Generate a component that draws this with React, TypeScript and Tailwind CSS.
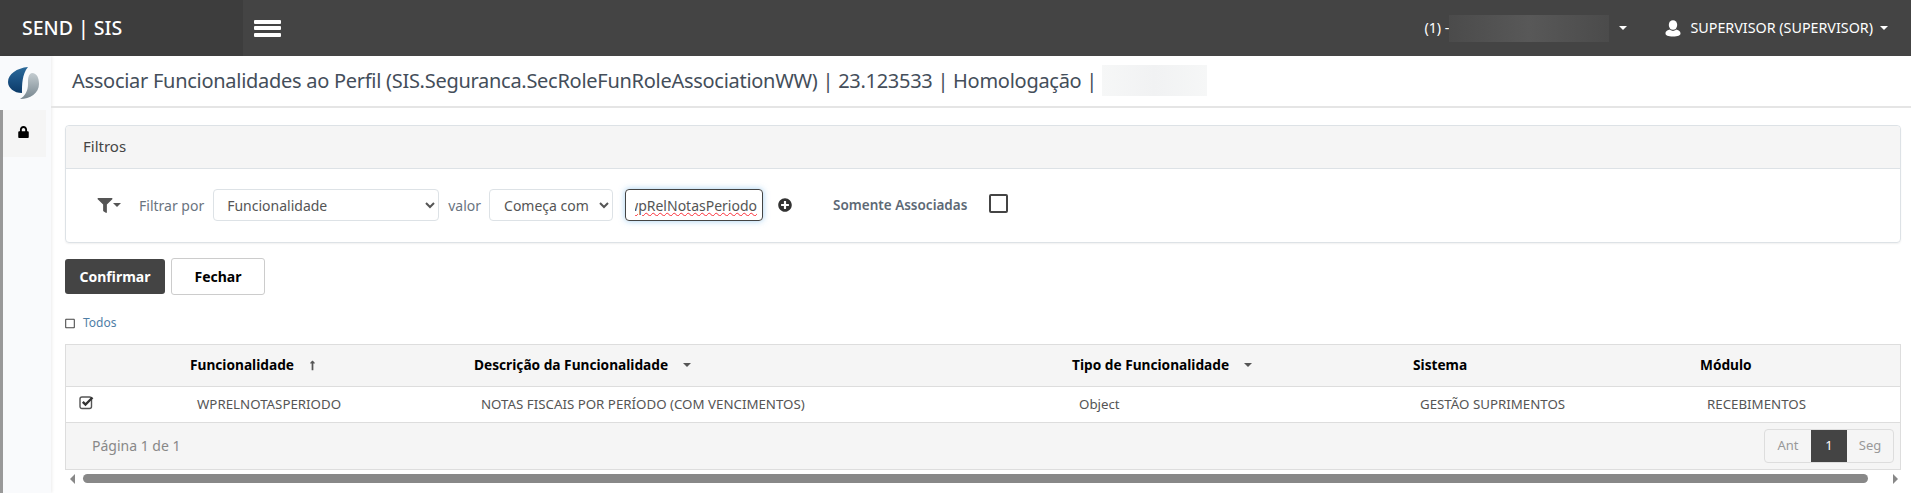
import { FaFilter, FaLock, FaLongArrowAltUp, FaPlusCircle, FaRegSquare } from 'react-icons/fa'

const columns = [
  { title: 'Funcionalidade', value: 'WPRELNOTASPERIODO', sort: 'up' },
  { title: 'Descrição da Funcionalidade', value: 'NOTAS FISCAIS POR PERÍODO (COM VENCIMENTOS)', sort: 'down' },
  { title: 'Tipo de Funcionalidade', value: 'Object', sort: 'down' },
  { title: 'Sistema', value: 'GESTÃO SUPRIMENTOS', sort: '' },
  { title: 'Módulo', value: 'RECEBIMENTOS', sort: '' },
]

function Caret({ className }: { className?: string }) {
  return <span className={`inline-block w-0 h-0 border-x-[4px] border-x-transparent border-t-[4px] ${className ?? ''}`} />
}

function Logo() {
  return (
    <svg viewBox="0 0 32 32" className="w-[32px] h-[32px]">
      <defs>
        <linearGradient id="blue" x1="0" y1="0" x2="0" y2="1">
          <stop offset="0" stopColor="#2c6a99" />
          <stop offset="0.45" stopColor="#1c5486" />
          <stop offset="1" stopColor="#0c3a68" />
        </linearGradient>
        <linearGradient id="grey" x1="0" y1="0" x2="0" y2="1">
          <stop offset="0" stopColor="#c4ccd0" />
          <stop offset="1" stopColor="#77868f" />
        </linearGradient>
      </defs>
      <path d="M20 0C9 1 0 7 0 15c0 6 6 11 14 11 0-8 0-19 6-26Z" fill="url(#blue)" />
      <path d="M24 6c5 0 7 5 7 11 0 9-9 15-19 15 5-3 8-8 8-15 0-5 0-10 4-11Z" fill="url(#grey)" />
    </svg>
  )
}

function UserIcon() {
  return (
    <svg viewBox="0 0 16 17" className="ml-[38px] w-[16px] h-[17px] fill-white">
      <ellipse cx="8" cy="5" rx="4.2" ry="4.8" />
      <path d="M5 9.5c-2 .6-4.5 1.4-4.5 4 0 2 2.5 3 7.5 3s7.5-1 7.5-3c0-2.600-2.500-3.400-4.500-4-1 1-2 1.400-3 1.400s-2-.4-3-1.400Z" />
    </svg>
  )
}

function CheckedBox() {
  return (
    <svg viewBox="0 0 16 15" className="w-[16px] h-[15px]">
      <rect x="1" y="2" width="11.500" height="11.500" rx="2" fill="none" stroke="#555" strokeWidth="1.400" />
      <path d="M3.800 6.800 6.500 9.500 13.500 2.500" fill="none" stroke="#333" strokeWidth="2.400" />
    </svg>
  )
}

export default function App() {
  return (
    <div className="w-[1911px] h-[493px] overflow-hidden flex flex-col bg-white text-[#555] font-['Noto_Sans','DejaVu_Sans',sans-serif]">
      {/* Top bar */}
      <header className="h-14 shrink-0 flex items-center bg-[#444] text-white">
        <div className="w-[243px] h-full bg-[#3d3d3d] pl-[22px] flex items-center text-[19.5px] font-medium">SEND | SIS</div>
        <div className="ml-[11px] w-[27px] h-[17px] flex flex-col justify-between">
          <span className="h-[4px] rounded-[1px] bg-white" />
          <span className="h-[4px] rounded-[1px] bg-white" />
          <span className="h-[4px] rounded-[1px] bg-white" />
        </div>
        <div className="ml-auto flex items-center text-[14.300px]">
          <span>(1) -</span>
          <div className="w-[160px] h-[27px] bg-gradient-to-r from-[#4b4b4b] via-[#585858] to-[#4b4b4b]" />
          <Caret className="ml-[10px] border-t-white" />
          <UserIcon />
          <span className="ml-[9px]">SUPERVISOR (SUPERVISOR)</span>
          <Caret className="ml-[7px] mr-[23px] border-t-white" />
        </div>
      </header>

      <div className="flex-1 flex min-h-0">
        {/* Side menu */}
        <aside className="w-[51px] shrink-0 bg-[#f9fafc] shadow-[1px_0_3px_rgba(0,0,0,0.08)] flex flex-col">
          <div className="h-[54px] pl-[8px] flex items-center"><Logo /></div>
          <div className="flex-1 flex border-l-[3px] border-l-[#999]">
            <div className="w-[43px] h-[47px] bg-[#f5f5f5] pl-[15px] pb-[3px] flex items-center text-black">
              <FaLock className="w-[11px] h-[12px]" />
            </div>
          </div>
        </aside>

        <main className="flex-1 min-w-0">
          <div className="h-[52px] flex items-center border-b-2 border-b-[#e5e5e5] pl-[21px] text-[20px] tracking-[-0.280px] text-[#444e5a]">
            <span>Associar Funcionalidades ao Perfil (SIS.Seguranca.SecRoleFunRoleAssociationWW) | 23.123533 | Homologação |</span>
            <div className="ml-[5px] mb-[1px] w-[105px] h-[31px] bg-gradient-to-r from-[#f6f7f7] via-[#f1f2f3] to-[#f6f7f7]" />
          </div>

          <div className="pl-[14px] pr-[10px] pt-[17px]">
            {/* Filters */}
            <section className="h-[118px] rounded-[4px] border border-[#dde2e6] shadow-[0_1px_2px_rgba(0,0,0,0.06)]">
              <div className="h-[43px] bg-[#f5f5f5] border-b border-[#dde2e6] rounded-t-[4px] pl-[17px] pb-[2px] flex items-center text-[15px] text-[#444]">Filtros</div>
              <div className="flex items-center pl-[31px] pt-[20px] text-[14px]">
                <FaFilter className="w-[16px] h-[15px] text-[#555]" />
                <Caret className="border-t-[#555]" />
                <span className="ml-[18px] text-[#6a7480]">Filtrar por</span>
                <select className="ml-[9px] w-[226px] h-[32px] pl-[9px] rounded-[4px] border border-[#dde2e6] bg-white text-[14px] text-[#555]">
                  <option>Funcionalidade</option>
                </select>
                <span className="ml-[9px] text-[#6a7480]">valor</span>
                <select className="ml-[8px] w-[124px] h-[32px] pl-[10px] rounded-[4px] border border-[#dde2e6] bg-white text-[14px] text-[#555]">
                  <option>Começa com</option>
                </select>
                <div className="ml-[12px] w-[138px] h-[32px] pl-[9px] pr-[5px] flex items-center rounded-[4px] border border-[#444] shadow-[0_0_6px_rgba(102,175,233,0.6)] text-[#555] whitespace-nowrap">
                  <div className="w-full flex justify-end overflow-hidden">
                    <span className="shrink-0 underline decoration-wavy decoration-red-500 decoration-1">wpRelNotasPeriodo</span>
                  </div>
                </div>
                <FaPlusCircle className="ml-[15px] w-[14px] h-[14px] text-[#333]" />
                <span className="ml-[41px] font-semibold text-[13.500px] text-[#5d6975]">Somente Associadas</span>
                <div className="ml-[22px] w-[19px] h-[19px] mb-[4px] rounded-[2px] border-2 border-[#444] bg-white" />
              </div>
            </section>

            {/* Actions */}
            <div className="flex items-center gap-[6px] mt-[15px]">
              <button className="w-[100px] h-[35px] rounded-[3px] bg-[#444] text-white font-bold text-[14px]">Confirmar</button>
              <button className="w-[94px] h-[37px] rounded-[3px] border border-[#ccc] bg-white text-black font-bold text-[14px]">Fechar</button>
            </div>

            <div className="flex items-center mt-[22px] h-[12px] text-[12px] text-[#4f7ea6]">
              <FaRegSquare className="w-[10px] h-[11px] text-[#444]" />
              <span className="ml-[8px]">Todos</span>
            </div>

            {/* Grid */}
            <div className="mt-[15px] border border-[#ddd]">
              <div className="h-[42px] grid grid-cols-[118px_284px_598px_341px_287px_1fr] items-center bg-[#f5f5f5] border-b border-[#ddd] text-[13.700px] font-bold text-black">
                <span />
                {columns.map((c) => (
                  <div key={c.title} className="pl-[6px] flex items-center">
                    <span>{c.title}</span>
                    {c.sort === 'up' && <FaLongArrowAltUp className="ml-[14px] w-[9px] h-[11px] text-[#555]" />}
                    {c.sort === 'down' && <Caret className="ml-[15px] border-t-[#555]" />}
                  </div>
                ))}
              </div>
              <div className="h-[36px] grid grid-cols-[118px_284px_598px_341px_287px_1fr] items-center border-b border-[#ddd] text-[13.300px] text-[#555]">
                <div className="pl-[13px] pb-[4px]"><CheckedBox /></div>
                {columns.map((c) => (
                  <div key={c.title} className="pl-[13px]">{c.value}</div>
                ))}
              </div>
              <div className="h-[46px] bg-[#f5f5f5] flex items-center pl-[26px] pr-[6px] text-[14px] text-[#888]">
                <span className="pb-[2px]">Página 1 de 1</span>
                <div className="ml-auto h-[34px] flex rounded-[4px] border border-[#ddd] text-[13px] text-[#999]">
                  <span className="w-[46px] flex items-center justify-center">Ant</span>
                  <span className="w-[36px] flex items-center justify-center bg-[#444] text-white">1</span>
                  <span className="w-[46px] flex items-center justify-center">Seg</span>
                </div>
              </div>
            </div>

            {/* Horizontal scrollbar */}
            <div className="mt-[4px] h-[9px] flex items-center pl-[5px] pr-[3px]">
              <span className="w-0 h-0 border-y-[5px] border-y-transparent border-r-[5px] border-r-[#888]" />
              <span className="ml-[8px] flex-1 h-[9px] rounded-full bg-[#888]" />
              <span className="ml-[25px] w-0 h-0 border-y-[5px] border-y-transparent border-l-[5px] border-l-[#888]" />
            </div>
          </div>
        </main>
      </div>
    </div>
  )
}
